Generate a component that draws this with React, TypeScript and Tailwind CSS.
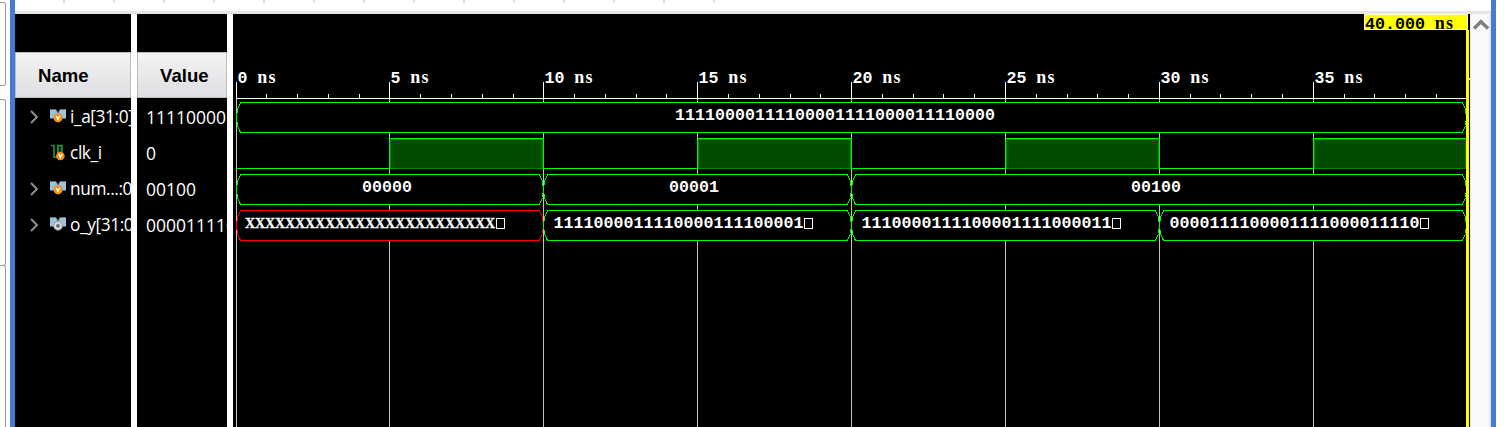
import React from "react";

const NS = 30.78;
const ORIGIN = 236;
const majors = [236, 389, 543, 697, 851, 1005, 1159, 1313];
const toolbarTicks = Array.from({ length: 14 }, (_, i) => i);

type Kind = "bus-in" | "clock" | "bus-out";
const signals: { name: string; value: string; kind: Kind }[] = [
  { name: "i_a[31:0]", value: "11110000", kind: "bus-in" },
  { name: "clk_i", value: "0", kind: "clock" },
  { name: "num...:0]", value: "00100", kind: "bus-in" },
  { name: "o_y[31:0]", value: "000011110", kind: "bus-out" },
];

function SignalIcon({ kind }: { kind: Kind }) {
  if (kind === "clock") {
    return (
      <svg width="18" height="18" viewBox="0 0 18 18" className="block shrink-0">
        <path d="M7.5 1.5H12V10H7.5Z" fill="#0b3a14" />
        <path d="M1 1.5H4V13.2H7.8V1.5H12V9" fill="none" stroke="#2a9140" strokeWidth="1.6" />
        <circle cx="10.4" cy="12" r="4.3" fill="#ef8d25" />
        <path d="M8.7 10L10.4 13.4L12.1 10" fill="none" stroke="#fff0d4" strokeWidth="1.4" />
      </svg>
    );
  }
  return (
    <svg width="18" height="18" viewBox="0 0 18 18" className="block shrink-0">
      <path d="M0 1H5.8L8 5L10.2 1H16V10.5H0Z" fill="#9bc4d7" />
      <path d="M0 1.5H5.8L8 5L10.2 1.5H16" fill="none" stroke="#5f7680" strokeWidth="1" />
      {kind === "bus-in" ? (
        <>
          <circle cx="8" cy="9.8" r="4.6" fill="#ef8d25" />
          <path d="M6.2 7.8L8 11.3L9.8 7.8" fill="none" stroke="#fff0d4" strokeWidth="1.5" />
        </>
      ) : (
        <>
          <circle cx="8" cy="9.8" r="4.4" fill="#dcdcdc" stroke="#8b8b8b" strokeWidth=".7" />
          <circle cx="8" cy="9.8" r="1.6" fill="#666" stroke="#777" strokeWidth=".8" />
        </>
      )}
    </svg>
  );
}

function Bus({ x1, x2, y, color = "#00ff00" }: { x1: number; x2: number; y: number; color?: string }) {
  const a = x1 + 0.5;
  const b = x2 + 0.5;
  const t = y + 0.5;
  return (
    <path
      d={`M${a} ${t + 15}L${a + 1} ${t + 7}L${a + 4} ${t}H${b - 4}L${b - 1} ${t + 7}L${b} ${t + 15}L${b - 1} ${t + 23}L${b - 4} ${t + 30}H${a + 4}L${a + 1} ${t + 23}Z`}
      fill="#000"
      stroke={color}
      shapeRendering="crispEdges"
    />
  );
}

function Label({ x, y, text, overflow = false, fill = "#fff" }: { x: number; y: number; text: string; overflow?: boolean; fill?: string }) {
  return (
    <>
      <text x={x} y={y} fill={fill} textLength={text.length * 10} className="font-['Liberation_Mono',monospace] text-[16.67px] font-bold whitespace-pre">
        {text}
      </text>
      {overflow && (
        <rect x={x + text.length * 10 + 1.5} y={y - 9.5} width="8" height="10" fill="none" stroke={fill} shapeRendering="crispEdges" />
      )}
    </>
  );
}

/** Time labels set the unit in slab-like letters, one per 10px cell. */
function TimeLabel({ x, y, value, fill = "#fff" }: { x: number; y: number; value: string; fill?: string }) {
  const unit = x + (value.length + 1) * 10;
  return (
    <text x={x} y={y} fill={fill} className="font-['Liberation_Mono',monospace] text-[16.67px] font-bold whitespace-pre">
      {value}{" "}
      <tspan x={`${unit - 0.3} ${unit + 11}`} className="font-['Liberation_Serif',serif] text-[18px]">
        ns
      </tspan>
    </text>
  );
}

function UnknownLabel({ x, y, count }: { x: number; y: number; count: number }) {
  const xs = Array.from({ length: count }, (_, i) => x + i * 10).join(" ");
  return (
    <>
      <text x={xs} y={y} fill="#fff" stroke="#fff" strokeWidth=".3" className="font-['Liberation_Serif',serif] text-[14px] font-bold">
        {"X".repeat(count)}
      </text>
      <rect x={x + count * 10 + 1.5} y={y - 9.5} width="8" height="10" fill="none" stroke="#fff" shapeRendering="crispEdges" />
    </>
  );
}

function Waveform() {
  return (
    <svg width="1237" height="413" viewBox="233 14 1237 413" className="block shrink-0 bg-black">
      <g shapeRendering="crispEdges">
        {majors.map((x) => (
          <React.Fragment key={x}>
            <rect x={x} y="99" width="1" height="328" fill="#c0c0c0" />
            <rect x={x} y="82" width="1" height="17" fill="#fff" />
          </React.Fragment>
        ))}
        {Array.from({ length: 40 }, (_, i) => i)
          .filter((i) => i % 5 !== 0)
          .map((i) => (
            <rect key={i} x={Math.floor(ORIGIN + i * NS)} y="94" width="1" height="4" fill="#fff" />
          ))}
        <rect x="236" y="98" width="1231" height="1" fill="#fff" />
      </g>
      {majors.map((x, i) => (
        <TimeLabel key={x} x={x + 1.5} y={83} value={`${i * 5}`} />
      ))}
      <Bus x1={236} x2={1466} y={102} />
      <g shapeRendering="crispEdges">
        {[236, 543, 851, 1159].map((x, i) => {
          const rise = [389, 697, 1005, 1313][i];
          const fall = [543, 851, 1159, 1466][i];
          return (
            <React.Fragment key={x}>
              <rect x={x} y="168" width={rise - x} height="1" fill="#00ff00" />
              <rect x={rise} y="138" width={fall - rise + 1} height="31" fill="#008000" />
              <rect x={rise + 2} y="140" width={fall - rise - 3} height="28" fill="#004c00" />
              <path d={`M${rise + 0.5} 169V138.5H${fall + 0.5}V169`} fill="none" stroke="#00ff00" />
            </React.Fragment>
          );
        })}
      </g>
      <Bus x1={236} x2={543} y={174} />
      <Bus x1={543} x2={851} y={174} />
      <Bus x1={851} x2={1466} y={174} />
      <Bus x1={236} x2={543} y={210} color="#ff0000" />
      <Bus x1={543} x2={851} y={210} />
      <Bus x1={851} x2={1159} y={210} />
      <Bus x1={1159} x2={1466} y={210} />
      <Label x={675} y={120} text="11110000111100001111000011110000" />
      <Label x={362} y={192} text="00000" />
      <Label x={669} y={192} text="00001" />
      <Label x={1131} y={192} text="00100" />
      <UnknownLabel x={245} y={228} count={25} />
      <Label x={553.4} y={228} text="1111000011110000111100001" overflow />
      <Label x={861.4} y={228} text="1110000111100001111000011" overflow />
      <Label x={1169.4} y={228} text="0000111100001111000011110" overflow />
      <rect x="1364.5" y="14.5" width="103" height="15" fill="#ff0" stroke="#ffffd0" />
      <TimeLabel x={1365} y={29} value="40.000" fill="#000" />
      <rect x="1466" y="30" width="3" height="397" fill="#ff0" />
      <rect x="1469" y="78" width="1" height="2" fill="#fff" />
    </svg>
  );
}

function ColumnHeader({ title }: { title: string }) {
  return (
    <div className="mt-[38px] flex h-[46px] items-center border border-[#bbb] bg-linear-to-b from-[#f3f3f3] to-[#dfdfe3] pt-px pl-[22px] font-['Liberation_Sans',sans-serif] text-[18.6px] font-bold text-black">
      {title}
    </div>
  );
}

export default function App() {
  return (
    <div className="flex h-[427px] w-[1509px] overflow-hidden bg-white">
      <aside className="flex w-[10px] shrink-0 flex-col">
        <div className="mt-[2px] h-[84px] w-[6px] shrink-0 rounded-r-[3px] border border-l-0 border-[#999]" />
        <div className="mt-[13px] h-[167px] w-[6px] shrink-0 rounded-r-[3px] border border-l-0 border-[#999]" />
        <div className="-mt-px h-[180px] w-[6px] shrink-0 rounded-tr-[3px] border border-l-0 border-[#999]" />
      </aside>
      <div className="w-[5px] shrink-0 bg-[#487bd0]" />
      <main className="flex w-[1476px] shrink-0 flex-col">
        <div className="flex h-[14px] shrink-0 gap-[48px] border-b-3 border-[#e6e6e6] pl-[48px]">
          {toolbarTicks.map((i) => (
            <span key={i} className="h-[3px] w-[2px] shrink-0 bg-[#dcdcdc]" />
          ))}
        </div>
        <div className="flex h-[413px]">
          <section className="w-[116px] shrink-0 overflow-hidden bg-black">
            <ColumnHeader title="Name" />
            <div className="pt-px">
              {signals.map((s) => (
                <div key={s.name} className="flex h-[36px] items-center pl-[14px]">
                  <svg width="10" height="14" viewBox="0 0 10 14" className="shrink-0">
                    {s.kind !== "clock" && <path d="M2 1L8 7L2 13" fill="none" stroke="#929292" strokeWidth="1.9" />}
                  </svg>
                  <span className="ml-[11px] w-[20px] shrink-0">
                    <SignalIcon kind={s.kind} />
                  </span>
                  <span className="font-['Open_Sans',sans-serif] text-[17.3px] tracking-[-0.4px] whitespace-nowrap text-white">{s.name}</span>
                </div>
              ))}
            </div>
          </section>
          <div className="w-[6px] shrink-0 bg-white" />
          <section className="w-[90px] shrink-0 overflow-hidden bg-black">
            <ColumnHeader title="Value" />
            <div className="pt-px">
              {signals.map((s) => (
                <div key={s.name} className="flex h-[36px] items-center pl-[9px] font-['Open_Sans',sans-serif] text-[17.5px] whitespace-nowrap text-white">
                  {s.value}
                </div>
              ))}
            </div>
          </section>
          <div className="w-[6px] shrink-0 bg-white" />
          <Waveform />
          <div className="flex w-[21px] shrink-0 justify-center border-r-2 border-l border-[#e5e5e5] bg-[#fafafa] pt-[5px] pl-[2px]">
            <svg width="16" height="11" viewBox="0 0 16 11" className="shrink-0">
              <path d="M1 9.5L8 2.7L15 9.5" fill="none" stroke="#808080" strokeWidth="3.4" />
            </svg>
          </div>
        </div>
      </main>
      <div className="w-[5px] shrink-0 bg-[#487bd0]" />
    </div>
  );
}
